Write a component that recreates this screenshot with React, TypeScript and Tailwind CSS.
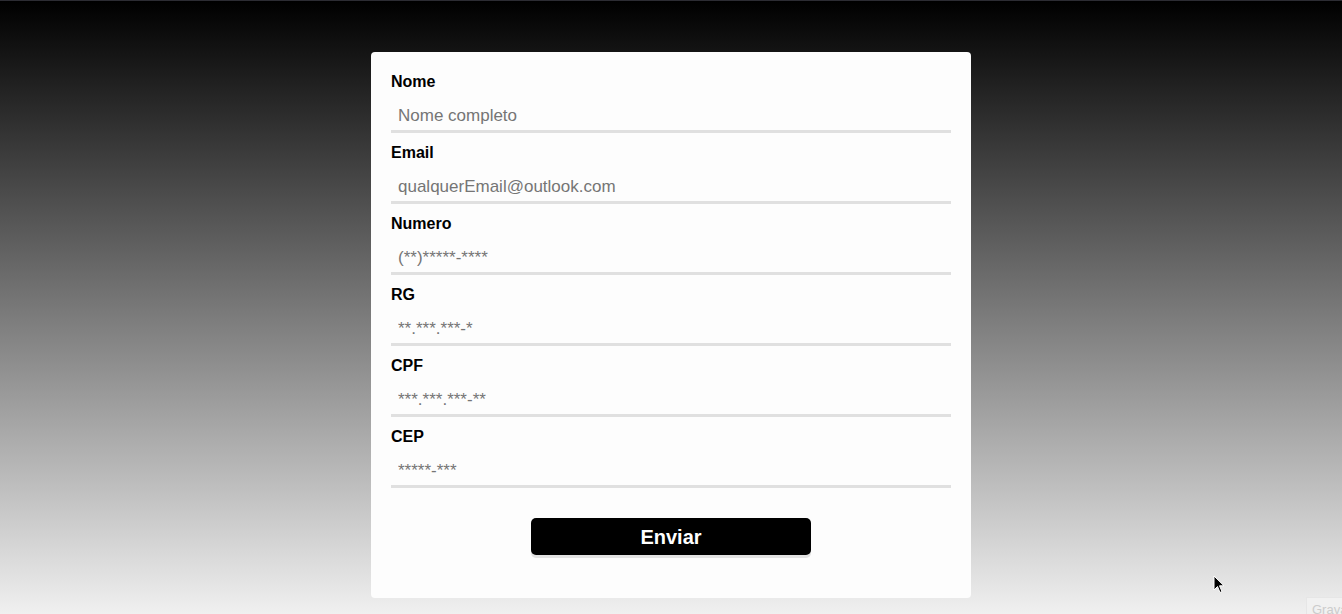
const fields = [
  { label: 'Nome', placeholder: 'Nome completo' },
  { label: 'Email', placeholder: 'qualquerEmail@outlook.com' },
  { label: 'Numero', placeholder: '(**)*****-****' },
  { label: 'RG', placeholder: '**.***.***-*' },
  { label: 'CPF', placeholder: '***.***.***-**' },
  { label: 'CEP', placeholder: '*****-***' }
]

function App(): React.JSX.Element {
  return (
    <div
      className="relative min-h-[614px] overflow-hidden border-t border-[#2c2c33] bg-[linear-gradient(to_bottom,#000000,#f0f0f0)] pt-[51px] text-black"
      style={{ fontFamily: '"Liberation Sans", Arial, sans-serif' }}
    >
      <form className="mx-auto flex w-[600px] flex-col rounded-[4px] bg-[#fdfdfd] px-5 pt-5 pb-[43px]">
        {fields.map((field) => (
          <label key={field.label} className="mb-[10px] flex flex-col">
            <span className="h-[18px] text-[16px] leading-[20px] font-bold">{field.label}</span>
            <input
              type="text"
              placeholder={field.placeholder}
              className="h-[43px] w-full border-b-[3px] border-[#e0e0e0] bg-transparent px-[7px] pt-[12px] text-[17px] outline-none placeholder:text-[#757575]"
            />
          </label>
        ))}
        <button
          type="button"
          className="mx-auto mt-5 h-[37px] w-[280px] rounded-[5px] bg-black text-[20px] font-bold text-white shadow-[0_3px_0_#e2e2e2]"
        >
          Enviar
        </button>
      </form>

      <svg className="absolute left-[1213px] top-[574px]" width="12" height="19" viewBox="0 0 12 19">
        <path d="M1 1 L1 15 L4.5 11.5 L7 17.5 L9 16.5 L6.5 10.8 L11 10.8 Z" fill="black" stroke="white" strokeWidth="1" />
      </svg>

      <div className="absolute left-[1306px] top-[596px] h-[30px] w-[60px] border border-[#e6e6e6] bg-[#f1f1f1] px-[5px] pt-[4px] text-[13px] leading-[16px] text-[#cccccc]">
        Grava
      </div>
    </div>
  )
}

export default App
